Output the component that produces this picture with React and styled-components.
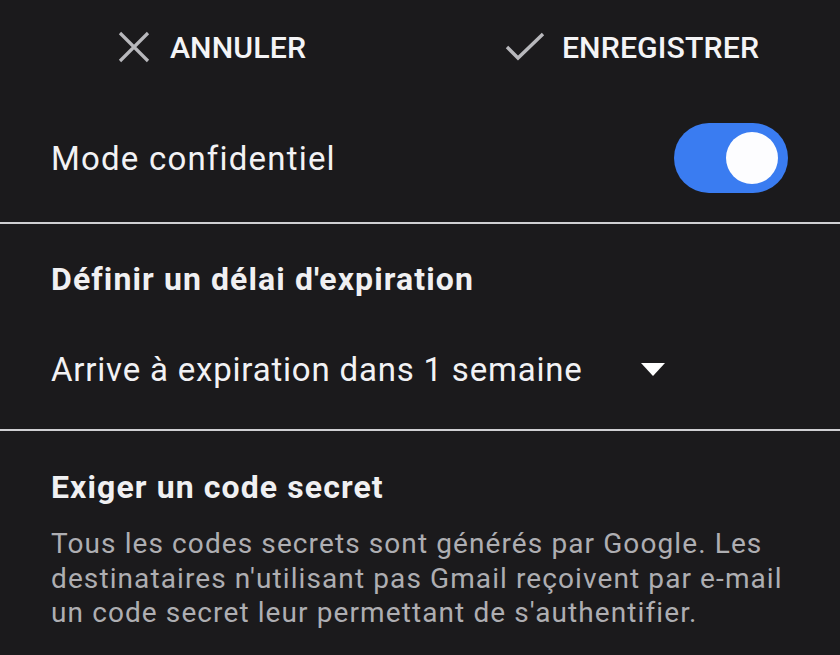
import React from "react";
import styled, { createGlobalStyle } from "styled-components";

const Global = createGlobalStyle`
  html, body { margin: 0; padding: 0; background: #1b1a1c; }
  body { font-family: Roboto, "Noto Sans", sans-serif; -webkit-font-smoothing: antialiased; }
`;

const Page = styled.div`
  width: 840px;
  height: 655px;
  background: #1b1a1c;
  color: #f2f2f4;
  overflow: hidden;
  display: flex;
  flex-direction: column;
`;

const TopBar = styled.div`
  display: flex;
  height: 94px;
  align-items: center;
`;

const ActionButton = styled.button`
  flex: 1;
  display: flex;
  align-items: center;
  justify-content: center;
  gap: ${(p) => p.$gap}px;
  background: none;
  border: none;
  padding: 0;
  margin-left: ${(p) => p.$shift}px;
  color: #f4f4f6;
  font-family: Roboto, sans-serif;
  font-weight: 500;
  font-size: 30.3px;
  letter-spacing: 0.1px;
  svg { flex: none; }
`;

const Row = styled.div`
  display: flex;
  align-items: center;
  justify-content: space-between;
  padding: 0 52px 0 51px;
  height: ${(p) => p.$h}px;
`;

const Label = styled.span`
  font-size: 33px;
  font-weight: 400;
  letter-spacing: 1.2px;
  color: #f2f2f4;
`;

const Track = styled.div`
  width: 114px;
  height: 70px;
  border-radius: 35px;
  background: #3a7cf1;
  display: flex;
  align-items: center;
  justify-content: flex-end;
  padding-right: 10px;
  box-sizing: border-box;
`;

const Thumb = styled.div`
  width: 52px;
  height: 52px;
  border-radius: 50%;
  background: #fdfdff;
`;

const Divider = styled.div`
  height: 2px;
  background: #cfcfd2;
  margin-top: ${(p) => p.$top || 0}px;
`;

const Section = styled.div`
  padding: 0 51px;
  display: flex;
  flex-direction: column;
`;

const Title = styled.h2`
  margin: 0;
  font-size: 32px;
  font-weight: 700;
  letter-spacing: 1.1px;
  color: #f0f0f2;
  padding-top: ${(p) => p.$top}px;
  line-height: 40px;
`;

const Select = styled.div`
  display: flex;
  align-items: center;
  gap: 58px;
  height: 80px;
  margin-top: ${(p) => p.$top}px;
  font-size: 33px;
  letter-spacing: 0.8px;
  color: #f2f2f4;
`;

const Caret = styled.span`
  width: 0;
  height: 0;
  border-left: 12.5px solid transparent;
  border-right: 12.5px solid transparent;
  border-top: 13px solid #ffffff;
`;

const Body = styled.p`
  margin: 20px 0 0;
  font-size: 28px;
  line-height: 34.5px;
  letter-spacing: 1.1px;
  color: #aeaeb2;
`;

export default function App() {
  return (
    <Page>
      <Global />
      <TopBar>
        <ActionButton $gap={20} $shift={4}>
          <svg width="32" height="32" viewBox="0 0 32 32">
            <path d="M2 2 L30 30 M30 2 L2 30" stroke="#b8b8bc" strokeWidth="3.2" strokeLinecap="butt" />
          </svg>
          ANNULER
        </ActionButton>
        <ActionButton $gap={17} $shift={4}>
          <svg width="40" height="30" viewBox="0 0 40 30">
            <path d="M2 15 L13 26 L38 2" stroke="#b8b8bc" strokeWidth="3.4" fill="none" />
          </svg>
          ENREGISTRER
        </ActionButton>
      </TopBar>
      <Row $h={128}>
        <Label>Mode confidentiel</Label>
        <Track>
          <Thumb />
        </Track>
      </Row>
      <Divider />
      <Section>
        <Title $top={35}>Définir un délai d'expiration</Title>
        <Select $top={30}>
          Arrive à expiration dans 1 semaine
          <Caret />
        </Select>
      </Section>
      <Divider $top={20} />
      <Section>
        <Title $top={36}>Exiger un code secret</Title>
        <Body>
          Tous les codes secrets sont générés par Google. Les destinataires n'utilisant pas Gmail reçoivent par e-mail un code secret leur permettant de s'authentifier.
        </Body>
      </Section>
    </Page>
  );
}
